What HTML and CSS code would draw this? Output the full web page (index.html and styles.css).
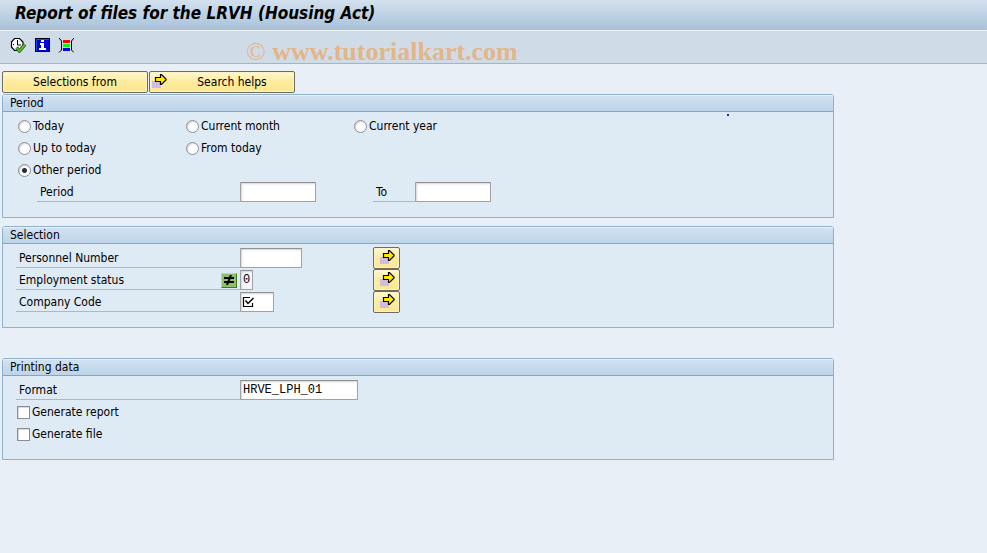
FILE: index.html
```
<!DOCTYPE html>
<html lang="en">
<head>
    <meta charset="UTF-8">
    <meta name="viewport" content="width=device-width, initial-scale=1.0">
    <title>Report of files for the LRVH (Housing Act)</title>
    <link rel="stylesheet" href="styles.css">
</head>
<body>
    <!-- shared yellow arrow -->
    <svg class="defs" width="0" height="0" aria-hidden="true">
        <symbol id="arrow" viewBox="0 0 16 16">
            <rect x="1" y="8" width="9" height="7" fill="#d0bce0"/>
            <path d="M4.500 4.500h5v-3h1l4.500 4.500v1l-4.500 4.500h-1v-3h-5z" fill="#ffe800" stroke="#000" stroke-width="1.200"/>
        </symbol>
    </svg>

    <header class="titlebar">
        <h1>Report of files for the LRVH (Housing Act)</h1>
    </header>

    <div class="toolbar">
        <button type="button" class="tool" aria-label="Execute">
            <svg width="16" height="16" viewBox="0 0 16 16">
                <path d="M4.500 1.500h5l3.500 3.500v5l-3.500 3.500h-5l-3-3.500v-5z" fill="#fff" stroke="#000" stroke-width="1.200"/>
                <path d="M7.500 3v5h3.500M7 11v1M3 7.500h1" fill="none" stroke="#000"/>
                <path d="M6.500 10.500l3 3.500 5.500-6.500" fill="none" stroke="#2c6a14" stroke-width="3.500"/>
                <path d="M6.500 10.500l3 3.500 5.500-6.500" fill="none" stroke="#64b836" stroke-width="1.800"/>
            </svg>
        </button>
        <button type="button" class="tool" aria-label="Information">
            <svg width="16" height="16" viewBox="0 0 16 16" shape-rendering="crispEdges">
                <rect x="1" y="1" width="15" height="14" fill="#000"/>
                <rect x="2" y="2" width="13" height="12" fill="#1a4fe0"/>
                <rect x="3" y="3" width="12" height="11" fill="#0000d8"/>
                <path d="M7 3h3v2H7zM6 6h4v5h2v2H5v-2h2V8H6z" fill="#fff"/>
            </svg>
        </button>
        <button type="button" class="tool" aria-label="Selection options">
            <svg width="16" height="16" viewBox="0 0 16 16">
                <rect x="5" y="3" width="7" height="3" fill="#f00"/>
                <rect x="5" y="7" width="7" height="3" fill="#0f0"/>
                <rect x="5" y="11" width="7" height="3" fill="#00f"/>
                <path d="M1 1l2.500 3v9L1 15.500M16 1l-2.500 3v9l2.500 2.500" fill="none" stroke="#000"/>
            </svg>
        </button>
        <span class="watermark"><span class="copy">©</span> www.tutorialkart.com</span>
    </div>

    <main class="content">
        <div class="actions">
            <button type="button" class="btn">Selections from</button>
            <button type="button" class="btn">
                <svg class="btn-icon" width="16" height="16"><use href="#arrow"/></svg>
                <span class="btn-text">Search helps</span>
            </button>
        </div>

        <section class="panel">
            <h2>Period</h2>
            <div class="panel-body">
                <div class="radios">
                    <label><input type="radio" name="range">Today</label>
                    <label><input type="radio" name="range">Current month</label>
                    <label><input type="radio" name="range">Current year</label>
                    <label><input type="radio" name="range">Up to today</label>
                    <label class="last"><input type="radio" name="range">From today</label>
                    <label><input type="radio" name="range" checked>Other period</label>
                </div>
                <div class="row indent">
                    <label class="name" for="from">Period</label>
                    <div class="field"><input type="text" id="from" class="w-date"></div>
                    <label class="name name-to" for="to">To</label>
                    <input type="text" id="to" class="w-date">
                </div>
            </div>
            <span class="dot"></span>
        </section>

        <section class="panel">
            <h2>Selection</h2>
            <div class="panel-body">
                <div class="row">
                    <label class="name" for="pernr">Personnel Number</label>
                    <div class="field"><input type="text" id="pernr" class="w-number"></div>
                    <button type="button" class="btn more" aria-label="Multiple selection for personnel number"><svg width="16" height="16"><use href="#arrow"/></svg></button>
                </div>
                <div class="row">
                    <div class="name">
                        <label for="status">Employment status</label>
                        <button type="button" class="option" aria-label="Not equal">
                            <svg width="12" height="10" viewBox="0 0 12 10"><path d="M1 3h10M1 7h10M8 0L4 10" fill="none" stroke="#000" stroke-width="2"/></svg>
                        </button>
                    </div>
                    <div class="field"><input type="text" id="status" class="w-flag" value="0"></div>
                    <button type="button" class="btn more" aria-label="Multiple selection for employment status"><svg width="16" height="16"><use href="#arrow"/></svg></button>
                </div>
                <div class="row">
                    <label class="name" for="bukrs">Company Code</label>
                    <div class="field">
                        <input type="text" id="bukrs" class="w-code" required>
                        <svg class="required" width="12" height="12" viewBox="0 0 12 12"><path d="M8 1.500H1.500v9h9V7" fill="none" stroke="#000" stroke-width="1.200"/><path d="M3.500 4.500l2.500 3 5.500-5.500" fill="none" stroke="#000" stroke-width="1.500"/></svg>
                    </div>
                    <button type="button" class="btn more" aria-label="Multiple selection for company code"><svg width="16" height="16"><use href="#arrow"/></svg></button>
                </div>
            </div>
        </section>

        <section class="panel printing">
            <h2>Printing data</h2>
            <div class="panel-body">
                <div class="row">
                    <label class="name" for="format">Format</label>
                    <div class="field"><input type="text" id="format" class="w-format" value="HRVE_LPH_01"></div>
                </div>
                <label class="check"><input type="checkbox">Generate report</label>
                <label class="check"><input type="checkbox">Generate file</label>
            </div>
        </section>
    </main>
</body>
</html>
```
FILE: styles.css
```
* {
    margin: 0;
    padding: 0;
    box-sizing: border-box;
}

body {
    min-height: 100vh;
    background: #e8eff7;
    color: #000;
    font-family: "DejaVu Sans Condensed", "DejaVu Sans", sans-serif;
    font-size: 12px;
    line-height: 16px;
}

button,
input {
    font: inherit;
    color: inherit;
}

.defs {
    position: absolute;
}

.titlebar {
    height: 30px;
    padding: 2px 15px;
    background: linear-gradient(#d3e1ee, #a9c1d9);
}

.titlebar h1 {
    font-size: 17px;
    line-height: 22px;
    font-style: italic;
    font-weight: bold;
}

.toolbar {
    position: relative;
    display: flex;
    align-items: center;
    gap: 8px;
    height: 34px;
    padding: 0 10px;
    background: #cfdce7;
    border-top: 1px solid #eef3f8;
    border-bottom: 1px solid #a3b6c9;
}

.tool {
    width: 16px;
    height: 16px;
    margin-bottom: 4px;
    background: none;
    border: none;
}

.tool svg,
.btn svg,
.option svg {
    display: block;
}

.watermark {
    position: absolute;
    left: 246px;
    top: 5px;
    font-family: "Liberation Serif", serif;
    font-size: 26px;
    line-height: 32px;
    font-weight: bold;
    color: #e3b587;
    white-space: nowrap;
}

.copy {
    font-weight: normal;
}

.content {
    padding: 7px 2px;
}

.actions {
    display: flex;
    gap: 1px;
    margin-bottom: 1px;
}

.btn {
    position: relative;
    width: 146px;
    height: 22px;
    background: linear-gradient(#fff8d2, #fdeb9c 50%, #fbe795);
    border: 1px solid #6e6b60;
    border-radius: 2px;
    box-shadow: inset 0 0 0 1px #fdf3c4;
}

.btn-icon {
    position: absolute;
    left: 1px;
    top: 1px;
}

.btn-text {
    padding-left: 20px;
}

.panel {
    position: relative;
    max-width: 832px;
    margin-bottom: 8px;
    background: #deeaf4;
    border: 1px solid #8fb0cf;
    border-radius: 3px 3px 0 0;
}

.panel h2 {
    height: 17px;
    padding-left: 7px;
    font-size: 12px;
    font-weight: normal;
    background: linear-gradient(#d3e2f1, #bdd4e9);
    border-bottom: 1px solid #86a5c6;
    border-radius: 2px 2px 0 0;
    box-shadow: inset 0 1px 0 #e9f1f8;
}

.panel-body {
    padding: 3px 13px 14px;
}

.printing {
    margin-top: 30px;
}

.radios {
    display: grid;
    grid-template-columns: 168px 168px 1fr;
    padding-left: 2px;
}

.radios label,
.check {
    display: flex;
    align-items: center;
    gap: 2px;
    height: 22px;
}

.radios .last {
    grid-column: 2 / 4;
}

input[type="radio"],
input[type="checkbox"] {
    appearance: none;
    width: 13px;
    height: 13px;
    background: #fff;
    border: 1px solid #8b8e92;
    box-shadow: inset 1px 1px 1px #d6d6d6;
}

input[type="radio"] {
    border-radius: 50%;
}

input[type="radio"]:checked {
    background: radial-gradient(circle, #2b2b3c 2px, #fff 3px);
}

.check {
    padding-left: 1px;
}

.row {
    display: flex;
    align-items: center;
    height: 22px;
}

.name {
    display: flex;
    justify-content: space-between;
    align-items: center;
    flex: 0 0 224px;
    height: 20px;
    padding: 1px 3px 0;
    border-bottom: 1px solid #b0b7be;
}

.indent {
    padding-left: 21px;
}

.indent .name {
    flex-basis: 203px;
}

.indent .name-to {
    flex-basis: 42px;
}

.field {
    position: relative;
    flex: 0 0 133px;
    display: flex;
}

input[type="text"] {
    height: 20px;
    padding: 0 2px;
    background: #fff;
    border: 1px solid #a0a2a6;
    border-top-color: #8e9094;
    border-radius: 1px;
    box-shadow: inset 1px 1px 2px #d4d4d4;
    font-family: "Liberation Mono", monospace;
    font-size: 12px;
}

.w-date {
    width: 76px;
}

.w-number {
    width: 62px;
}

input.w-flag {
    width: 13px;
    background: #f4f8fb;
}

.w-code {
    width: 34px;
}

.w-format {
    width: 118px;
}

.required {
    position: absolute;
    left: 2px;
    top: 4px;
}

.more {
    display: flex;
    align-items: flex-start;
    justify-content: center;
    width: 27px;
    padding-top: 1px;
}

.option {
    display: flex;
    align-items: center;
    justify-content: center;
    width: 16px;
    height: 15px;
    background: #8dbf6c;
    border: 1px solid;
    border-color: #b9dba0 #3f7a1e #3f7a1e #b9dba0;
}

/* pointer mark over the period group */
.dot {
    position: absolute;
    left: 724px;
    top: 19px;
    width: 2px;
    height: 2px;
    background: #2222cc;
}
```
